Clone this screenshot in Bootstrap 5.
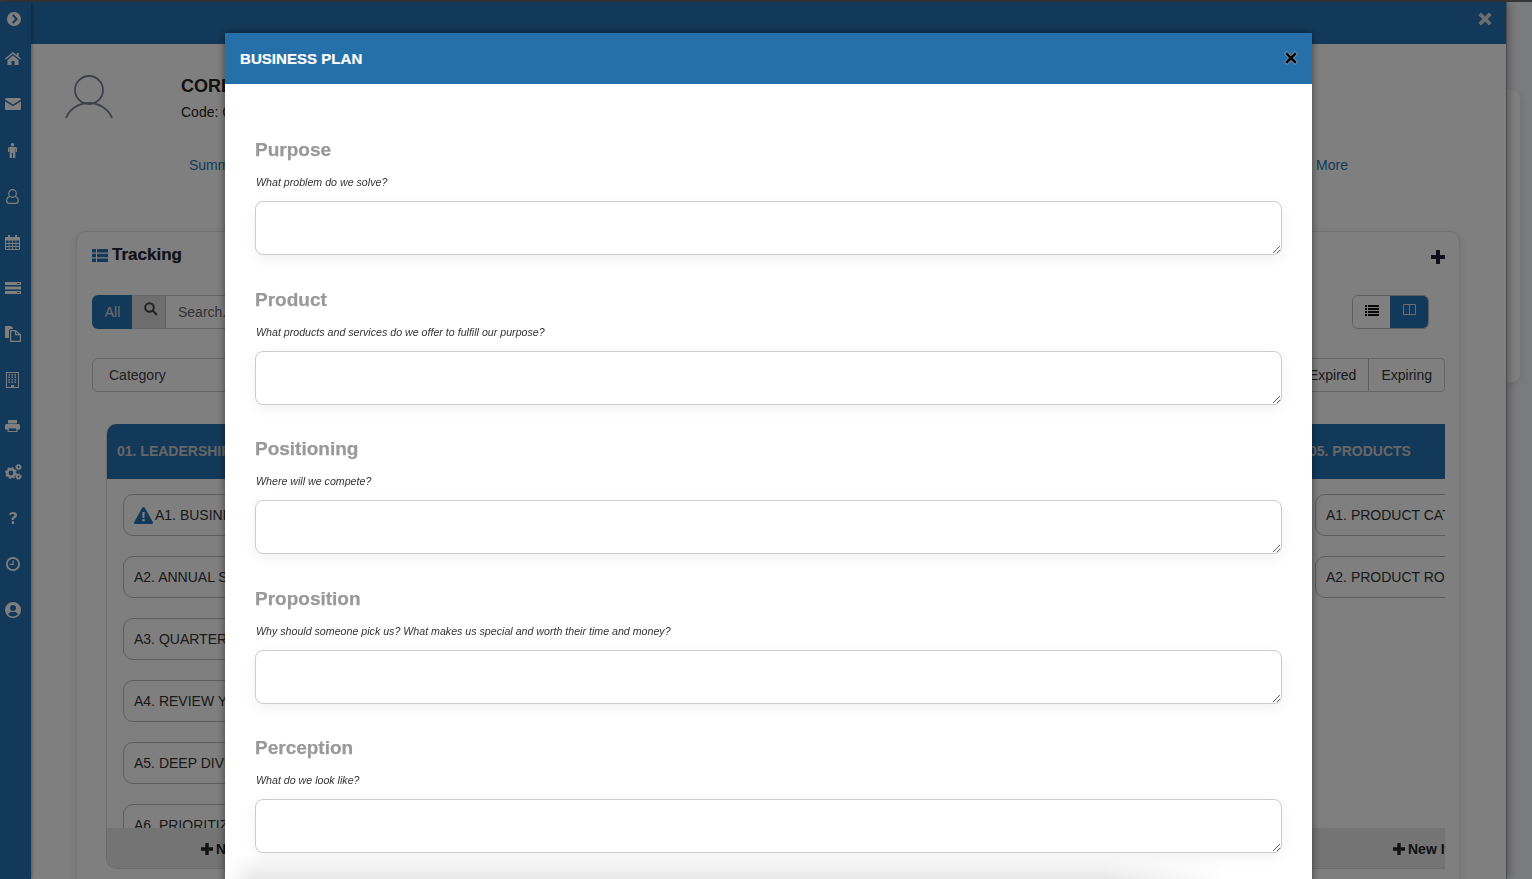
<!DOCTYPE html>
<html lang="en"><head><meta charset="utf-8"><title>Business Plan</title>
<link href="https://cdn.jsdelivr.net/npm/bootstrap@5.3.0/dist/css/bootstrap.min.css" rel="stylesheet">
<style>
html,body{height:100%;overflow:hidden}
body{font-family:"Liberation Sans",Arial,sans-serif;background:#f5f6fa;color:#333;font-size:14px}
svg{display:block;fill:currentColor}
.top-strip{height:2px;background:#6e6e6e}
.shell{height:877px}
.side-rail{width:31px;background:#2673b4;color:#fff;flex:none;box-shadow:1px 0 3px rgba(0,0,0,.35);position:relative;z-index:2}
.rail-icon{height:46px;padding-left:5px;display:flex;align-items:center}
.rail-first{height:34px;padding-left:7px}
.rail-home{height:45px}
.slide-panel{width:1476px;flex:none;background:#fff;border-right:1px solid #999;box-shadow:2px 0 8px rgba(0,0,0,.3);position:relative;z-index:1;overflow:hidden}
.page-rest{flex:1;padding-top:88px;min-width:0}
.back-card{height:292px;width:13px;background:#fff;border-radius:0 8px 8px 0;box-shadow:0 2px 8px rgba(0,0,0,.12)}
.panel-head{height:42px;background:#2673b4;color:#ddd;padding:10px 14px 0 0}
.person-row{height:100px;padding-left:34px}
.person-icon{width:48px;margin-top:31px;color:#7d8391}
.person-text{margin-left:68px;margin-top:31px;line-height:1.2}
.person-name{font-size:18px;font-weight:700;color:#222;line-height:22px;white-space:nowrap}
.person-code{font-size:14px;color:#222;margin-top:7px}
.tab-row{height:87px;padding:11px 158px 0 158px;font-size:14px}
.tab-row a{color:#2673b4;text-decoration:none}
.track-card{margin-left:45px;width:1384px;background:#fff;border:1px solid #e6e6e6;border-radius:10px;box-shadow:0 2px 10px rgba(0,0,0,.12);height:700px;padding:0 14px 0 15px}
.track-title{height:63px;padding-top:10px}
.track-title h2{font-size:17px;font-weight:700;margin:0;line-height:26px;color:#1d2333;align-self:flex-start;-webkit-text-stroke:.2px #1d2333}
.track-plus{margin-top:8px;color:#1d2333}
.tool-row{height:34px}
.all-btn{background:#2673b4;color:#ddd;width:40px;height:34px;border-radius:6px 0 0 6px;line-height:34px;text-align:center;padding-left:1px}
.find-btn{background:#ddd;width:33px;height:34px;border:1px solid #ccc;border-width:1px 0;color:#444;padding:6px 0 0 12px}
.find-box{width:300px;height:34px;border:1px solid #ccc;border-left:1px solid #bbb;padding:0 12px;line-height:32px;color:#666}
.view-group{height:34px;width:77px;margin-right:16px;border:1px solid #bbb;border-radius:6px;overflow:hidden}
.view-a{width:37px;color:#111;padding:9px 0 0 12px}
.view-b{width:40px;background:#2673b4;color:#ddd;padding:9px 0 0 13px;margin:-1px -1px -1px 0;flex:1}
.filter-row{height:34px;margin-top:29px}
.cat-box{width:300px;height:34px;border:1px solid #ccc;border-radius:6px;padding:0 16px;line-height:32px;color:#444}
.state-group{height:34px;border:1px solid #ccc;border-radius:4px;color:#333;line-height:32px}
.state-group span{padding:0 12px;display:block}
.state-group span+span{border-left:1px solid #bbb}
.board{margin:32px 0 0 14px;width:1339px;height:445px;overflow:hidden;gap:30px}
.lane{width:268px;flex:none;height:445px;border:1px solid #d8d8d8;border-width:0 1px 1px 1px;border-radius:10px 0 10px 10px;overflow:hidden}
.lane-head{height:55px;background:#2673b4;color:#ccc;font-weight:700;font-size:14px;padding:19px 0 0 10px;line-height:17px;flex:none;white-space:nowrap}
.lane-body{flex:1;overflow:hidden;padding:15px 0 0 16px}
.lane-item{height:42px;margin-bottom:20px;width:268px;border:1px solid #bbb;border-radius:10px;padding:0 10px;line-height:40px;white-space:nowrap;color:#333;font-size:14px;display:flex;align-items:center}
.warn-glyph{color:#2673b4;margin-right:2px}
.lane-foot{height:40px;background:#e8e8e8;flex:none;text-align:left;padding:12px 0 0 94px;font-weight:700;color:#222;white-space:nowrap;line-height:19px;display:flex;gap:3px}
.lane-foot svg{margin-top:3px}
.plan-modal{overflow:hidden}
.plan-dialog{max-width:1087px;width:1087px;margin:33px 0 0 225px}
.plan-content{border:0;border-radius:0;height:900px;box-shadow:0 0 8px rgba(0,0,0,.5)}
.plan-head{height:51px;background:#2670aa;color:#fff;padding:0 15px;border:0;border-radius:0;flex:none}
.plan-head h5{font-size:15px;font-weight:700;margin:0;letter-spacing:.05px;-webkit-text-stroke:.2px #fff}
.plan-close{color:#000;margin:-2px -1px 0 0}
.plan-body{padding:50px 30px 0;flex:none;position:relative}
.plan-field{height:149.5px}
.plan-field h4{font-size:19px;font-weight:700;color:#999;margin:0;line-height:31px;-webkit-text-stroke:.25px #999}
.plan-field p{font-size:10.65px;font-style:italic;color:#333;margin:0;line-height:14px;padding:10px 0 0 1px;height:36px}
.plan-field .form-control{height:54px;border:1px solid #ccc;border-radius:8px;box-shadow:0 4px 14px rgba(0,0,0,.06);padding:6px 12px}
.plan-fade{position:absolute;left:0;top:770px;height:25px;width:1000px;background:linear-gradient(to bottom,rgba(0,0,0,0),rgba(0,0,0,.09));-webkit-mask-image:linear-gradient(to right,transparent,#000 3%,#000 88%,transparent)}
</style></head>
<body>
<div class="top-strip"></div>
<div class="shell d-flex">
  <nav class="side-rail">
    <div class="rail-icon rail-first"><svg width="14" height="14" viewBox="0 0 14 14"><path fill-rule="evenodd" d="M7 0a7 7 0 1 1 0 14A7 7 0 0 1 7 0zM5 3.600L8.200 7 5 10.400l1.500 1.300L11 7 6.500 2.300z"/></svg></div>
    <div class="rail-icon rail-home"><svg width="16" height="13" viewBox="0 0 16 13"><path d="M8 0L0 6.600l.9 1L8 1.900l7.100 5.700.9-1-2.300-1.900V1h-2v2.100zM2.500 8L8 3.400 13.500 8v5H9.500V9h-3v4h-4z"/></svg></div>
    <div class="rail-icon"><svg width="16" height="12" viewBox="0 0 16 12"><path d="M0 1.500A1.500 1.500 0 0 1 1.500 0h13A1.500 1.500 0 0 1 16 1.500L8 6.500zM0 3.200l8 5 8-5v7.300a1.500 1.500 0 0 1-1.500 1.500h-13A1.500 1.500 0 0 1 0 10.500z"/></svg></div>
    <div class="rail-icon" style="padding-left:8px"><svg width="9" height="15" viewBox="0 0 9 15"><circle cx="4.500" cy="1.800" r="1.800"/><path d="M1.500 4h6A1.500 1.500 0 0 1 9 5.500V9H7.700V5.500h-.4V15H5V10H4v5H1.700V5.500h-.4V9H0V5.500A1.500 1.500 0 0 1 1.500 4z"/></svg></div>
    <div class="rail-icon" style="padding-left:6px"><svg width="13" height="15" viewBox="0 0 13 15" style="fill:none" stroke="currentColor" stroke-width="1.200"><circle cx="6.500" cy="4.500" r="3.800"/><path d="M4 7.500C1.800 8 .7 9.500.7 11.500c0 1.800 1 2.900 2.500 2.900h6.600c1.500 0 2.500-1.100 2.500-2.900 0-2-1.100-3.500-3.300-4"/></svg></div>
    <div class="rail-icon"><svg width="15" height="15" viewBox="0 0 15 15"><path fill-rule="evenodd" d="M3 0h2v2h5V0h2v2h2a1 1 0 0 1 1 1v11a1 1 0 0 1-1 1H1a1 1 0 0 1-1-1V3a1 1 0 0 1 1-1h2zM1 5.500V8h2.700V5.500zm3.500 0V8H7V5.500zm3.400 0V8h2.600V5.500zm3.400 0V8H14V5.500zM1 9v2h2.700V9zm3.500 0v2H7V9zm3.400 0v2h2.600V9zm3.400 0v2H14V9zM1 12v2h2.700v-2zm3.500 0v2H7v-2zm3.400 0v2h2.600v-2zm3.400 0v2H14v-2z"/></svg></div>
    <div class="rail-icon"><svg width="16" height="12" viewBox="0 0 16 12"><path fill-rule="evenodd" d="M0 0h16v3H0zm12 1v1h2.500V1zM0 4.500h16v3H0zm0 4.500h16v3H0zm12 1v1h2.500v-1z"/></svg></div>
    <div class="rail-icon"><svg width="16" height="16" viewBox="0 0 16 16"><path d="M0 1a1 1 0 0 1 1-1h5l2 2v1H5.500A1.500 1.500 0 0 0 4 4.500V12H1a1 1 0 0 1-1-1z"/><path style="fill:none" stroke="currentColor" stroke-width="1.200" d="M5.600 4.600h5v4h4.800v6.800H5.600zM10.600 4.600l4.800 4"/></svg></div>
    <div class="rail-icon"><svg width="15" height="16" viewBox="0 0 15 16"><path fill-rule="evenodd" d="M1 0h13v16H1zm1 1v14h4v-2h3v2h4V1zm1.500 1h1.500v1.500H3.500zm3 0h1.500v1.500H6.500zm3 0H11v1.500H9.500zm-6 2.500h1.500V6H3.500zm3 0h1.500V6H6.500zm3 0H11V6H9.500zm-6 2.500h1.500v1.500H3.500zm3 0h1.500v1.500H6.500zm3 0H11v1.500H9.500zm-6 2.500h1.500V11H3.500zm3 0h1.500V11H6.500zm3 0H11V11H9.500z"/></svg></div>
    <div class="rail-icon"><svg width="15" height="14" viewBox="0 0 15 14"><path fill-rule="evenodd" d="M3 1h9v3.500H3zM1.500 5h12A1.500 1.500 0 0 1 15 6.500V10.500h-2.500V13h-10v-2.500H0V6.500A1.500 1.500 0 0 1 1.500 5zm2.200 4.500V12h7.600V9.500z"/></svg></div>
    <div class="rail-icon"><svg width="17" height="16" viewBox="0 0 17 16"><g style="fill:none" stroke="currentColor"><circle cx="6" cy="9" r="3.700" stroke-width="2.600"/><circle cx="6" cy="9" r="5.200" stroke-width="1.500" stroke-dasharray="2 2.080"/><circle cx="13.500" cy="3" r="1.800" stroke-width="1.600"/><circle cx="13.500" cy="3" r="2.800" stroke-width=".9" stroke-dasharray="1.200 1"/><circle cx="13.500" cy="12.500" r="1.800" stroke-width="1.600"/><circle cx="13.500" cy="12.500" r="2.800" stroke-width=".9" stroke-dasharray="1.200 1"/></g></svg></div>
    <div class="rail-icon" style="padding-left:9px"><svg width="8" height="12" viewBox="0 0 8 12"><path d="M4 0C1.800 0 .6 1 0 2.300l1.600 1C2 2.500 2.700 2 3.700 2c.9 0 1.700.5 1.700 1.300 0 .7-.5 1-1.200 1.400C3.300 5.200 2.700 5.900 2.700 7v.9h2.300V7.300c0-.5.4-.8 1-1.200C7 5.500 8 4.700 8 3.200 8 1.200 6.200 0 4 0zM2.700 9.300h2.400V12H2.700z"/></svg></div>
    <div class="rail-icon" style="padding-left:6px"><svg width="14" height="14" viewBox="0 0 14 14"><path fill-rule="evenodd" d="M7 0a7 7 0 1 1 0 14A7 7 0 0 1 7 0zm0 1.800a5.200 5.200 0 1 0 0 10.400A5.200 5.200 0 0 0 7 1.800zM6.500 3.500h1.200V8H3.800V6.800h2.700z"/></svg></div>
    <div class="rail-icon"><svg width="16" height="16" viewBox="0 0 16 16"><path fill-rule="evenodd" d="M8 0a8 8 0 1 1 0 16A8 8 0 0 1 8 0zm0 3a3 3 0 1 0 0 6 3 3 0 0 0 0-6zM3.200 12.600A6.500 6.500 0 0 0 8 14.500a6.500 6.500 0 0 0 4.800-1.900C12.400 11 11 10 9.500 9.700 9 10 8.500 10.200 8 10.200S7 10 6.500 9.700C5 10 3.600 11 3.200 12.600z"/></svg></div>
  </nav>
  <section class="slide-panel">
    <div class="panel-head d-flex justify-content-end"><svg width="14" height="14" viewBox="0 0 14 14"><path d="M3 .4L7 4.400l4-4L13.600 3l-4 4 4 4-2.600 2.600-4-4-4 4L.4 11l4-4-4-4z"/></svg></div>
    <div class="person-row d-flex">
      <div class="person-icon"><svg width="48" height="44" viewBox="0 0 48 44" style="fill:none" stroke="currentColor" stroke-width="1.800"><circle cx="24" cy="15" r="14"/><path d="M1 43c3-8 12-15 23-15s20 7 23 15"/></svg></div>
      <div class="person-text"><div class="person-name">CORE BUSINESS</div><div class="person-code">Code: C001</div></div>
    </div>
    <div class="tab-row d-flex justify-content-between"><a href="#">Summary</a><a href="#">More</a></div>
    <div class="track-card">
      <div class="track-title d-flex justify-content-between">
        <h2 class="d-flex align-items-center gap-1"><svg width="16" height="13" viewBox="0 0 16 13" style="color:#2673b4"><path d="M0 0h4v3.500H0zM5 0h11v3.500H5zM0 4.700h4v3.600H0zM5 4.700h11v3.600H5zM0 9.500h4V13H0zM5 9.500h11V13H5z"/></svg>Tracking</h2>
        <svg class="track-plus" width="14" height="14" viewBox="0 0 14 14"><path d="M5 0h4v5h5v4H9v5H5V9H0V5h5z"/></svg>
      </div>
      <div class="tool-row d-flex justify-content-between">
        <div class="d-flex"><div class="all-btn">All</div><div class="find-btn"><svg width="14" height="14" viewBox="0 0 14 14" style="fill:none" stroke="currentColor" stroke-width="2"><circle cx="5.500" cy="5.500" r="4.300"/><path d="M8.600 8.600l4.400 4.400"/></svg></div><div class="find-box">Search...</div></div>
        <div class="view-group d-flex"><div class="view-a"><svg width="14" height="11" viewBox="0 0 14 11"><path d="M0 0h2v2H0zM3 0h11v2H3zM0 3h2v2H0zM3 3h11v2H3zM0 6h2v2H0zM3 6h11v2H3zM0 9h2v2H0zM3 9h11v2H3z"/></svg></div><div class="view-b"><svg width="13" height="11" viewBox="0 0 13 11" style="fill:none" stroke="currentColor"><path d="M.5.500h12v10H.500zM6.500.500v10"/></svg></div></div>
      </div>
      <div class="filter-row d-flex justify-content-between">
        <div class="cat-box">Category</div>
        <div class="state-group d-flex"><span>Expired</span><span>Expiring</span></div>
      </div>
      <div class="board d-flex">
        <div class="lane d-flex flex-column"><div class="lane-head">01. LEADERSHIP</div>
          <div class="lane-body">
            <div class="lane-item"><svg class="warn-glyph" width="19" height="17" viewBox="0 0 19 17"><path fill-rule="evenodd" d="M9.500 0c.5 0 1 .3 1.300.8l8 14.200c.5 1-.2 2-1.300 2h-16c-1.100 0-1.800-1-1.300-2l8-14.200c.3-.5.800-.8 1.300-.8zM8.300 5l.3 6h1.800l.3-6zm0 7.300v2h2.400v-2z"/></svg>A1. BUSINESS PLAN</div>
            <div class="lane-item">A2. ANNUAL STRATEGY</div><div class="lane-item">A3. QUARTERLY GOALS</div><div class="lane-item">A4. REVIEW YOUR PLAN</div><div class="lane-item">A5. DEEP DIVE</div><div class="lane-item">A6. PRIORITIZE</div>
          </div>
          <div class="lane-foot"><svg width="12" height="12" viewBox="0 0 14 14"><path d="M5 0h4v5h5v4H9v5H5V9H0V5h5z"/></svg>New Item</div></div>
        <div class="lane d-flex flex-column"><div class="lane-head">02. MARKETING</div><div class="lane-body"></div><div class="lane-foot">New Item</div></div>
        <div class="lane d-flex flex-column"><div class="lane-head">03. SALES</div><div class="lane-body"></div><div class="lane-foot">New Item</div></div>
        <div class="lane d-flex flex-column"><div class="lane-head">04. OPERATIONS</div><div class="lane-body"></div><div class="lane-foot">New Item</div></div>
        <div class="lane d-flex flex-column" style="border-radius:0"><div class="lane-head">05. PRODUCTS</div>
          <div class="lane-body"><div class="lane-item">A1. PRODUCT CATALOG</div><div class="lane-item">A2. PRODUCT ROADMAP</div></div>
          <div class="lane-foot"><svg width="12" height="12" viewBox="0 0 14 14"><path d="M5 0h4v5h5v4H9v5H5V9H0V5h5z"/></svg>New Item</div></div>
      </div>
    </div>
  </section>
  <div class="page-rest"><div class="back-card"></div></div>
</div>
<div class="modal-backdrop show"></div>
<div class="modal d-block plan-modal" tabindex="-1">
  <div class="modal-dialog plan-dialog">
    <div class="modal-content plan-content">
      <div class="modal-header plan-head">
        <h5>BUSINESS PLAN</h5>
        <svg class="plan-close ms-auto" width="14" height="14" viewBox="0 0 14 14" stroke="#fff" stroke-width=".5"><path d="M3 .7L7 4.700l4-4L13.300 3l-4 4 4 4-2.300 2.300-4-4-4 4L.7 11l4-4-4-4z"/></svg>
      </div>
      <div class="modal-body plan-body">
        <div class="plan-field"><h4>Purpose</h4><p>What problem do we solve?</p><textarea class="form-control"></textarea></div>
        <div class="plan-field"><h4>Product</h4><p>What products and services do we offer to fulfill our purpose?</p><textarea class="form-control"></textarea></div>
        <div class="plan-field"><h4>Positioning</h4><p>Where will we compete?</p><textarea class="form-control"></textarea></div>
        <div class="plan-field"><h4>Proposition</h4><p>Why should someone pick us? What makes us special and worth their time and money?</p><textarea class="form-control"></textarea></div>
        <div class="plan-field"><h4>Perception</h4><p>What do we look like?</p><textarea class="form-control"></textarea></div>
        <div class="plan-fade"></div>
      </div>
    </div>
  </div>
</div>
<script src="https://cdn.jsdelivr.net/npm/bootstrap@5.3.0/dist/js/bootstrap.bundle.min.js"></script>
</body></html>
